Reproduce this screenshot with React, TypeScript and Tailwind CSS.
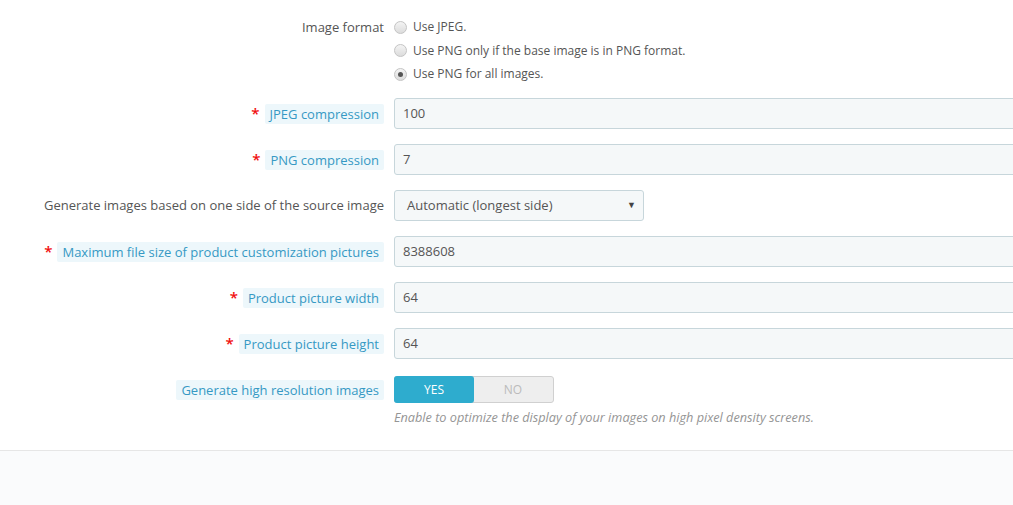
import React from 'react';

const font = { fontFamily: '"Open Sans", "Liberation Sans", sans-serif' };

const Req = () => <span className="mr-[5px] text-[15px] font-semibold leading-none text-[#f10d0d]">*</span>;

const Tip = ({ children }: { children: React.ReactNode }) => (
  <span className="inline-block rounded-[2px] bg-[#edf7fb] px-[5px] leading-[20px] text-[#3699c4]">{children}</span>
);

const Radio = ({ checked, label }: { checked?: boolean; label: string }) => (
  <label className="flex h-[23.5px] items-center pt-[1px]">
    <span className="flex h-[13px] w-[13px] items-center justify-center rounded-full border border-[#c4c4c4] bg-gradient-to-b from-[#f4f4f4] to-[#dcdcdc]">
      {checked && <span className="h-[5px] w-[5px] rounded-full bg-[#555]" />}
    </span>
    <span className="ml-[6px] text-[12px]">{label}</span>
  </label>
);

const Row = ({ label, children, className = '' }: { label: React.ReactNode; children: React.ReactNode; className?: string }) => (
  <div className={`flex items-center ${className}`}>
    <div className="flex w-[384px] shrink-0 items-center justify-end">{label}</div>
    <div className="ml-[10px] flex-1">{children}</div>
  </div>
);

const TextInput = ({ value }: { value: string }) => (
  <div className="flex h-[31px] w-[700px] items-center rounded-[3px] border border-[#c7d6db] bg-[#f5f8f9] pl-[8px] text-[#555]">
    {value}
  </div>
);

export default function App() {
  return (
    <div className="w-full overflow-hidden bg-white text-[13px] text-[#555]" style={font}>
      <div className="pt-[15px]">
        <div className="flex items-start">
          <div className="flex h-[23.5px] w-[384px] shrink-0 items-center justify-end pt-[1px]">Image format</div>
          <div className="ml-[10px]">
            <Radio label="Use JPEG." />
            <Radio label="Use PNG only if the base image is in PNG format." />
            <Radio checked label="Use PNG for all images." />
          </div>
        </div>

        <div className="mt-[12.5px] flex flex-col gap-[15px]">
          <Row label={<><Req /><Tip>JPEG compression</Tip></>}>
            <TextInput value="100" />
          </Row>
          <Row label={<><Req /><Tip>PNG compression</Tip></>}>
            <TextInput value="7" />
          </Row>
          <Row label={<span className="pt-[1px]">Generate images based on one side of the source image</span>}>
            <div className="flex h-[31px] w-[250px] items-center justify-between rounded-[3px] border border-[#c7d6db] bg-[#f5f8f9] pl-[12px] pr-[7px]">
              <span className="pt-[1px]">Automatic (longest side)</span>
              <span className="pb-[2px] text-[9px] text-[#444]">▼</span>
            </div>
          </Row>
          <Row label={<><Req /><Tip>Maximum file size of product customization pictures</Tip></>}>
            <TextInput value="8388608" />
          </Row>
          <Row label={<><Req /><Tip>Product picture width</Tip></>}>
            <TextInput value="64" />
          </Row>
          <Row label={<><Req /><Tip>Product picture height</Tip></>}>
            <TextInput value="64" />
          </Row>
        </div>

        <Row className="mt-[17px]" label={<Tip>Generate high resolution images</Tip>}>
          <div className="flex h-[27px] w-[160px] rounded-[3px] border border-[#d0d0d0] bg-[#eeeeee] text-[12px]">
            <span className="-m-px flex w-[80px] items-center justify-center rounded-[3px] bg-[#2eacce] text-white">YES</span>
            <span className="flex flex-1 items-center justify-center text-[#bbbbbb]">NO</span>
          </div>
        </Row>
        <div className="ml-[394px] mt-[5px] text-[12.7px] italic leading-[18px] text-[#959595]">
          Enable to optimize the display of your images on high pixel density screens.
        </div>
      </div>

      <div className="mt-[24px] h-[55px] border-t border-[#e6e6e6] bg-[#fafbfc]" />
    </div>
  );
}
